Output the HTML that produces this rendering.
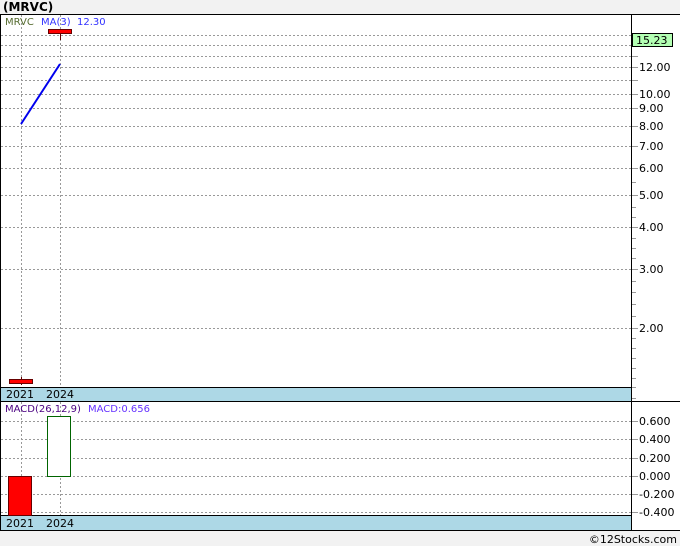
<!DOCTYPE html>
<html><head><meta charset="utf-8"><style>
html,body{margin:0;padding:0;background:#f2f2f2;}
svg{display:block;font-family:Verdana,"DejaVu Sans","Liberation Sans",sans-serif;}
</style></head><body>
<svg width="680" height="546" viewBox="0 0 680 546" xmlns="http://www.w3.org/2000/svg">
<rect x="0" y="0" width="680" height="546" fill="#f2f2f2"/>
<text x="3" y="11" font-size="12" font-weight="bold" fill="#000">(MRVC)</text>
<rect x="0.5" y="14.5" width="680" height="516" fill="#fff" stroke="#000"/>
<g stroke="#999" stroke-dasharray="2,2" stroke-width="1">
<line x1="1" x2="632" y1="35.5" y2="35.5"/>
<line x1="1" x2="632" y1="45.5" y2="45.5"/>
<line x1="1" x2="632" y1="56.5" y2="56.5"/>
<line x1="1" x2="632" y1="67.5" y2="67.5"/>
<line x1="1" x2="632" y1="80.5" y2="80.5"/>
<line x1="1" x2="632" y1="94.5" y2="94.5"/>
<line x1="1" x2="632" y1="108.5" y2="108.5"/>
<line x1="1" x2="632" y1="126.5" y2="126.5"/>
<line x1="1" x2="632" y1="146.5" y2="146.5"/>
<line x1="1" x2="632" y1="168.5" y2="168.5"/>
<line x1="1" x2="632" y1="195.5" y2="195.5"/>
<line x1="1" x2="632" y1="227.5" y2="227.5"/>
<line x1="1" x2="632" y1="269.5" y2="269.5"/>
<line x1="1" x2="632" y1="328.5" y2="328.5"/>
<line x1="21.5" x2="21.5" y1="15" y2="387"/>
<line x1="60.5" x2="60.5" y1="15" y2="387"/>
<line x1="1" x2="632" y1="421.5" y2="421.5"/>
<line x1="1" x2="632" y1="439.5" y2="439.5"/>
<line x1="1" x2="632" y1="458.5" y2="458.5"/>
<line x1="1" x2="632" y1="476.5" y2="476.5"/>
<line x1="1" x2="632" y1="494.5" y2="494.5"/>
<line x1="1" x2="632" y1="512.5" y2="512.5"/>
<line x1="21.5" x2="21.5" y1="402" y2="515"/>
<line x1="60.5" x2="60.5" y1="402" y2="515"/>
</g>
<g stroke="#999" stroke-width="1">
<line x1="632" x2="638" y1="56.5" y2="56.5"/><line x1="632" x2="638" y1="80.5" y2="80.5"/>
<line x1="632" x2="638" y1="67.5" y2="67.5"/><line x1="632" x2="638" y1="94.5" y2="94.5"/>
<line x1="632" x2="638" y1="108.5" y2="108.5"/><line x1="632" x2="638" y1="126.5" y2="126.5"/>
<line x1="632" x2="638" y1="146.5" y2="146.5"/><line x1="632" x2="638" y1="168.5" y2="168.5"/>
<line x1="632" x2="638" y1="195.5" y2="195.5"/><line x1="632" x2="638" y1="227.5" y2="227.5"/>
<line x1="632" x2="638" y1="269.5" y2="269.5"/><line x1="632" x2="638" y1="328.5" y2="328.5"/>
<line x1="632" x2="636" y1="182.5" y2="182.5"/><line x1="632" x2="636" y1="207.5" y2="207.5"/>
<line x1="632" x2="636" y1="217.5" y2="217.5"/><line x1="632" x2="636" y1="238.5" y2="238.5"/>
<line x1="632" x2="636" y1="248.5" y2="248.5"/><line x1="632" x2="636" y1="258.5" y2="258.5"/>
<line x1="632" x2="636" y1="281.5" y2="281.5"/><line x1="632" x2="636" y1="292.5" y2="292.5"/>
<line x1="632" x2="636" y1="304.5" y2="304.5"/><line x1="632" x2="636" y1="316.5" y2="316.5"/>
<line x1="632" x2="636" y1="338.5" y2="338.5"/><line x1="632" x2="636" y1="348.5" y2="348.5"/>
<line x1="632" x2="636" y1="358.5" y2="358.5"/><line x1="632" x2="636" y1="368.5" y2="368.5"/>
<line x1="632" x2="636" y1="378.5" y2="378.5"/>
<line x1="632" x2="638" y1="421.5" y2="421.5"/><line x1="632" x2="638" y1="439.5" y2="439.5"/>
<line x1="632" x2="638" y1="458.5" y2="458.5"/><line x1="632" x2="638" y1="476.5" y2="476.5"/>
<line x1="632" x2="638" y1="494.5" y2="494.5"/><line x1="632" x2="638" y1="512.5" y2="512.5"/>
<line x1="632" x2="636" y1="387.5" y2="387.5"/><line x1="632" x2="636" y1="398.5" y2="398.5"/>
</g>
<!-- bands -->
<rect x="1" y="388" width="631" height="13" fill="#add8e6"/>
<line x1="0" x2="632" y1="387.5" y2="387.5" stroke="#000"/>
<line x1="0" x2="680" y1="401.5" y2="401.5" stroke="#000"/>
<rect x="1" y="516" width="631" height="14" fill="#add8e6"/>
<line x1="0" x2="632" y1="515.5" y2="515.5" stroke="#000"/>
<line x1="631.5" x2="631.5" y1="14" y2="530" stroke="#000"/>
<g font-size="11" fill="#000">
<text x="6" y="398">2021</text><text x="46" y="398">2024</text>
<text x="6" y="527">2021</text><text x="46" y="527">2024</text>
</g>
<!-- legend -->
<text x="5" y="25" font-size="10" fill="#556b2f">MRVC</text>
<text x="41" y="25" font-size="10" fill="#3333ff">MA(3)</text>
<text x="77" y="25" font-size="10" fill="#3333ff">12.30</text>
<text x="5" y="412" font-size="10" fill="#4b0082">MACD(26,12,9)</text>
<text x="88" y="412" font-size="10" fill="#6633ff">MACD:0.656</text>
<!-- candles -->
<line x1="60.5" x2="60.5" y1="33" y2="40" stroke="#600"/>
<rect x="48.5" y="29.5" width="23" height="4" fill="#f00" stroke="#600"/>
<line x1="21.5" x2="21.5" y1="377" y2="385" stroke="#600"/>
<rect x="9.5" y="379.5" width="23" height="4" fill="#f00" stroke="#600"/>
<line x1="21" y1="124" x2="60" y2="64" stroke="#0000ee" stroke-width="2"/>
<!-- macd -->
<rect x="8.5" y="476.5" width="23" height="39" fill="#f00" stroke="#600"/>
<rect x="47.5" y="416.5" width="23" height="60" fill="#fff" stroke="#006400"/>
<!-- axis labels -->
<g font-size="11" fill="#000">
<text x="639" y="71">12.00</text>
<text x="639" y="98">10.00</text>
<text x="639" y="112">9.00</text>
<text x="639" y="130">8.00</text>
<text x="639" y="150">7.00</text>
<text x="639" y="172">6.00</text>
<text x="639" y="199">5.00</text>
<text x="639" y="231">4.00</text>
<text x="639" y="273">3.00</text>
<text x="639" y="332">2.00</text>
<text x="639" y="425">0.600</text>
<text x="639" y="443">0.400</text>
<text x="639" y="462">0.200</text>
<text x="639" y="480">0.000</text>
<text x="639" y="498">-0.200</text>
<text x="639" y="516">-0.400</text>
</g>
<rect x="632.5" y="33.5" width="40" height="13" fill="#b3ffb3" stroke="#000"/>
<text x="636" y="44" font-size="11" fill="#000">15.23</text>
<text x="677" y="543" font-size="11" fill="#000" text-anchor="end">©12Stocks.com</text>
</svg>
</body></html>
